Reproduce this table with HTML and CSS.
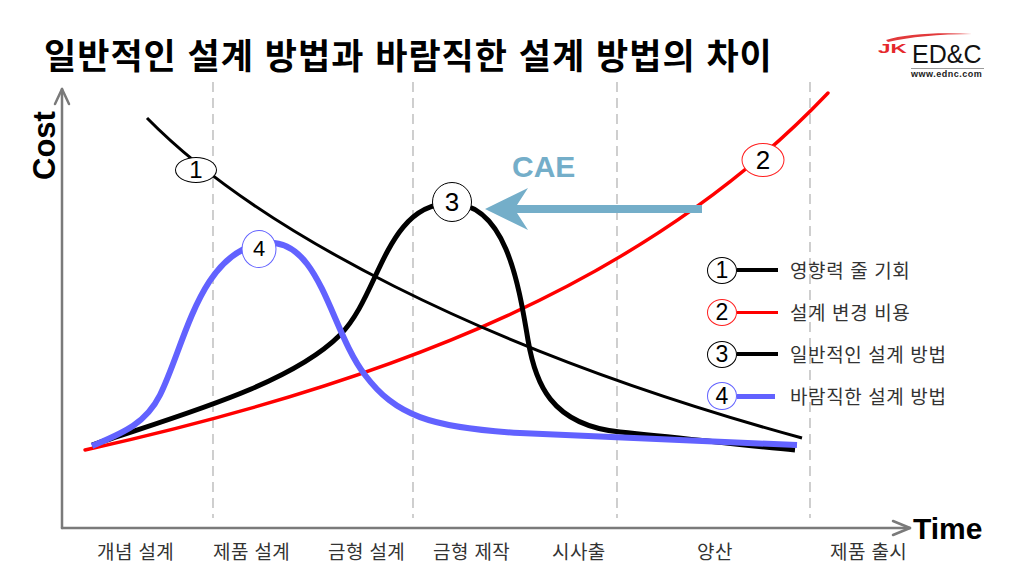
FILE: index.html
```html
<!DOCTYPE html>
<html lang="ko">
<head>
<meta charset="utf-8">
<title>일반적인 설계 방법과 바람직한 설계 방법의 차이</title>
<link rel="stylesheet" href="styles.css">
</head>
<body>
<div class="page">
  <header class="header">
    <h1 class="title">일반적인 설계 방법과 바람직한 설계 방법의 차이</h1>
    <div class="logo">
      <svg class="swoosh" viewBox="0 0 90 10" width="90" height="10"><path d="M2,8 C20,2 55,0 88,2 C55,2 25,5 4,10 Z" fill="#e2393b"/></svg>
      <div class="logo-main"><span class="jk">JK</span><span class="ednc">ED&amp;C</span></div>
      <div class="logo-url">www.ednc.com</div>
    </div>
  </header>

  <div class="chart">
    <svg class="plot" viewBox="0 80 1024 460" width="1024" height="460">
      <g class="grid" stroke="#b5b5b5" stroke-width="1.3" stroke-dasharray="10 6" fill="none">
        <line x1="213" y1="82" x2="213" y2="518"/>
        <line x1="413" y1="82" x2="413" y2="518"/>
        <line x1="617" y1="82" x2="617" y2="518"/>
        <line x1="810" y1="82" x2="810" y2="518"/>
      </g>
      <g stroke="#7a7a7a" stroke-width="2.5" fill="none" stroke-linecap="round" stroke-linejoin="round">
        <path d="M62,528 L62,89"/>
        <path d="M55,104 L62,89 L69,104"/>
        <path d="M62,528 L910,528"/>
        <path d="M893,521 L910,528 L893,535"/>
      </g>
      <path d="M85,450 C400,380 650,280 828,93" stroke="#ff0000" stroke-width="3.4" fill="none" stroke-linecap="round"/>
      <path d="M147,118 C255,228 480,350 802,438" stroke="#000" stroke-width="3" fill="none"/>
      <path d="M92,445 C180,415 290,385 340,335 C380,295 385,205 450,203 C505,203 518,280 528,340 C535,382 550,425 620,432 C690,439 750,446 795,450" stroke="#000" stroke-width="5" fill="none"/>
      <path d="M92,446 C120,434 145,425 160,395 C185,345 200,250 265,243 C320,237 330,330 365,375 C395,415 430,428 520,433 C600,437 700,441 797,445" stroke="#6262ff" stroke-width="6" fill="none"/>
      <polygon points="485,209 528,188 517,205 702,205 702,213 517,213 528,230" fill="#74aec9"/>
    </svg>

    <div class="axis-label cost">Cost</div>
    <div class="axis-label time">Time</div>
    <div class="cae">CAE</div>

    <div class="tag tag1">1</div>
    <div class="tag tag2">2</div>
    <div class="tag tag3">3</div>
    <div class="tag tag4">4</div>

    <ul class="legend">
      <li class="legend-row"><span class="badge">1</span><span class="swatch sw-black"></span><span class="legend-text">영향력 줄 기회</span></li>
      <li class="legend-row"><span class="badge badge-red">2</span><span class="swatch sw-red"></span><span class="legend-text">설계 변경 비용</span></li>
      <li class="legend-row"><span class="badge">3</span><span class="swatch sw-black"></span><span class="legend-text">일반적인 설계 방법</span></li>
      <li class="legend-row"><span class="badge badge-blue">4</span><span class="swatch sw-blue"></span><span class="legend-text">바람직한 설계 방법</span></li>
    </ul>
  </div>

  <div class="phases">
    <span>개념 설계</span>
    <span>제품 설계</span>
    <span>금형 설계</span>
    <span>금형 제작</span>
    <span>시사출</span>
    <span>양산</span>
    <span>제품 출시</span>
  </div>
</div>
</body>
</html>
```

FILE: styles.css
```css
* { box-sizing: border-box; margin: 0; padding: 0; }

body {
  background: #fff;
  font-family: "Liberation Sans", "Noto Sans CJK KR", sans-serif;
  color: #000;
}

.page {
  width: 1024px;
  height: 575px;
  overflow: hidden;
  background: #fff;
}

/* header */
.header {
  display: flex;
  justify-content: space-between;
  align-items: flex-start;
  height: 80px;
  padding: 0 39px 0 44px;
}

.title {
  font-family: "Noto Sans CJK KR", sans-serif;
  font-weight: 700;
  font-size: 35px;
  line-height: 40px;
  letter-spacing: 1px;
  padding-top: 34px;
  color: #000;
  white-space: nowrap;
}

.logo {
  width: 107px;
  margin-top: 32px;
  display: flex;
  flex-direction: column;
  align-items: flex-start;
}

.swoosh {
  display: block;
  margin-left: 6px;
}

.logo-main {
  display: flex;
  align-items: flex-start;
  height: 25px;
}

.jk {
  display: inline-block;
  width: 34px;
  font-size: 12.5px;
  line-height: 12px;
  font-weight: 700;
  color: #e5282c;
  margin-top: 1px;
  transform: scaleX(1.8);
  transform-origin: left center;
}

.ednc {
  font-size: 25px;
  line-height: 25px;
  color: #111;
}

.logo-url {
  margin-left: 33px;
  margin-top: 1px;
  width: 73px;
  border-top: 1.5px solid #9a9a9a;
  padding-top: 1px;
  font-size: 9px;
  line-height: 9px;
  font-weight: 700;
  color: #222;
  letter-spacing: 0.5px;
}

/* chart */
.chart {
  position: relative;
  height: 460px;
}

.plot {
  display: block;
}

.axis-label {
  position: absolute;
  font-weight: 700;
  color: #000;
}

.cost {
  left: 10px;
  top: 50px;
  width: 69px;
  height: 31px;
  font-size: 31px;
  line-height: 31px;
  text-align: center;
  transform: rotate(-90deg);
}

.time {
  left: 913px;
  top: 434px;
  font-size: 30px;
  line-height: 30px;
}

.cae {
  position: absolute;
  left: 512px;
  top: 72px;
  font-size: 30px;
  line-height: 30px;
  font-weight: 700;
  color: #74aec9;
}

.tag {
  position: absolute;
  display: flex;
  align-items: center;
  justify-content: center;
  border: 1.5px solid #000;
  border-radius: 50%;
  background: #fff;
  color: #000;
  transform: translate(-50%, -50%);
  font-family: "Liberation Sans", sans-serif;
}

.tag1 { left: 196px; top: 90px; width: 42px; height: 26px; font-size: 24px; }
.tag2 { left: 763px; top: 80px; width: 43px; height: 34px; font-size: 26px; border-color: #ff2020; }
.tag3 { left: 452px; top: 122px; width: 40px; height: 40px; font-size: 26px; }
.tag4 { left: 259px; top: 169px; width: 35px; height: 38px; font-size: 22px; border-color: #6262ff; border-width: 1.2px; }

/* legend */
.legend {
  position: absolute;
  left: 707px;
  top: 176px;
  list-style: none;
  display: flex;
  flex-direction: column;
  gap: 14px;
}

.legend-row {
  display: flex;
  align-items: center;
  height: 28px;
}

.badge {
  display: flex;
  align-items: center;
  justify-content: center;
  width: 30px;
  height: 27px;
  border: 1.5px solid #000;
  border-radius: 50%;
  font-size: 23px;
  color: #000;
  background: #fff;
}

.badge-red { border-color: #ff2020; }
.badge-blue { border-color: #6262ff; height: 28px; }

.swatch {
  display: block;
  width: 41px;
  height: 4px;
}

.sw-black { background: #000; }
.sw-red { background: #ff0000; height: 3px; }
.sw-blue { background: #6262ff; height: 5px; width: 38px; margin-right: 3px; }

.legend-text {
  margin-left: 12px;
  font-family: "Noto Sans CJK KR", sans-serif;
  font-size: 19px;
  line-height: 22px;
  letter-spacing: 0.6px;
  color: #333;
  white-space: nowrap;
}

/* phase labels */
.phases {
  display: grid;
  grid-template-columns: 116px 115px 105px 119px 145px 133px auto;
  padding-left: 97px;
  font-family: "Noto Sans CJK KR", sans-serif;
  font-size: 19px;
  line-height: 22px;
  letter-spacing: 0.4px;
  color: #333;
  white-space: nowrap;
}
```
